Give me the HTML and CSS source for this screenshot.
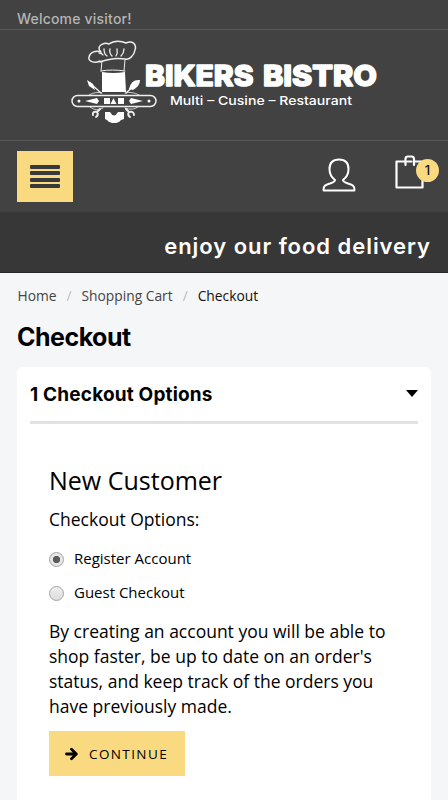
FILE: index.html
```html
<!DOCTYPE html>
<html lang="en">
<head>
<meta charset="utf-8">
<title>Checkout</title>
<link rel="stylesheet" href="styles.css">
</head>
<body>
<header>
  <div class="welcome"><span>Welcome visitor!</span></div>
  <div class="brand">
    <svg class="logo" viewBox="68 36 312 92" role="img" aria-label="Bikers Bistro">
      <g fill="none" stroke="#eee" stroke-width="1.500" stroke-linecap="round" stroke-linejoin="round">
        <path d="M100 61C94 64 88 61 89 57C90 52 96 50 101 52C95 46 104 42 109 44C114 40 122 41 126 43C132 40 137 44 135 50C134 56 129 60 125 59Q113 57 100 62"/>
        <path d="M99 53q3 0 4 2M104 49q0 5 3 7M110 49q-1 4 2 7M117 49q1 4-1 7M124 49q0 4-3 7" stroke-width="1.300"/>
        <path d="M102 61L101 71M125 60L124 71M101 71q11-2 24 0" stroke-width="1"/>
        <path d="M89 95q7-4 13-2M125 93q7-2 14 2M90 107q6 5 13 1M125 108q8 3 13-1" stroke-width="0.800"/>
        <path d="M90 83l11 10M137 83l-11 10" stroke-width="1.500"/>
        <path d="M97 112q-5-1-4 3m4-3l3-3m-3 3q2 3-1 5M129 112l-3-3m3 3q-2 3 1 5m-1-5q5-1 5 3" stroke-width="2"/>
        <rect x="72" y="95.500" width="84" height="11" rx="5.500"/>
      </g>
      <g fill="#fff">
        <path d="M102 72q11 2 23 0l1 20h-24z"/>
        <path d="M87 80l6 4 2 6-6-4zM140 80q-9-1-11 9l4 1q7-4 7-10z"/>
        <path d="M85 101l12-3 2 3-2 3zM143 101l-12-3-2 3 2 3z"/>
        <path d="M104 98h6v6h-6zM118 98h6v6h-6zM113.500 98l3 6h-6z"/>
        <circle cx="79" cy="101" r="1.500"/><circle cx="149" cy="101" r="1.500"/>
        <path d="M105 112h5q4 7 8 0h6v7l-3 1q-2 3-5 3h-4q-4-1-5-3l-2-1z"/>
      </g>
      <text class="brand-name" x="145" y="86" textLength="108.500" lengthAdjust="spacingAndGlyphs">BIKERS</text>
      <text class="brand-name" x="263" y="86" textLength="114" lengthAdjust="spacingAndGlyphs">BISTRO</text>
      <text class="brand-tag" x="170" y="104.500" textLength="182" lengthAdjust="spacingAndGlyphs">Multi – Cusine – Restaurant</text>
    </svg>
  </div>
  <div class="toolbar">
    <button class="menu" aria-label="Menu"><i></i><i></i><i></i><i></i></button>
    <div class="actions">
      <svg class="user" viewBox="0 0 34 34" fill="none" stroke="#fff" stroke-width="2" stroke-linejoin="round"><path d="M13 22C9 19 7.500 15 7.500 11C7.500 5 11 1.500 17 1.500S26.500 5 26.500 11C26.500 15 25 19 21 22C21 24 23 24.500 26 25.500C31 27 32.500 28 32.500 32Q32.500 32.500 32 32.500H2Q1.500 32.500 1.500 32C1.500 28 3 27 8 25.500C11 24.500 13 24 13 22Z"/></svg>
      <div class="cart">
        <svg viewBox="0 0 29 34" fill="none" stroke="#fff" stroke-width="2.200" stroke-linejoin="round" stroke-linecap="round"><path d="M9.500 6.500H1.500V32.500H27.500V6.500H19.500M12.500 6.500H16.500M10.500 10V4Q10.500 1.500 13 1.500H16.500Q19 1.500 19 4V10"/></svg>
        <span class="count">1</span>
      </div>
    </div>
  </div>
  <div class="slogan"><span>enjoy our food delivery</span></div>
</header>
<main>
  <nav class="crumbs"><a>Home</a><i>/</i><a>Shopping Cart</a><i>/</i><span>Checkout</span></nav>
  <h1><span>Checkout</span></h1>
  <section class="card">
    <div class="card-head"><h2>1 Checkout Options</h2><b class="caret"></b></div>
    <div class="card-body">
      <h3>New Customer</h3>
      <p class="label">Checkout Options:</p>
      <label class="option"><i class="radio on"></i><span>Register Account</span></label>
      <label class="option"><i class="radio"></i><span>Guest Checkout</span></label>
      <p class="info">By creating an account you will be able to shop faster, be up to date on an order's status, and keep track of the orders you have previously made.</p>
      <button class="continue"><svg viewBox="0 0 13 14" fill="none" stroke="#000" stroke-width="2.800" stroke-linejoin="round" stroke-linecap="round"><path d="M1.500 7H11M6.500 2.200L11.300 7L6.500 11.800"/></svg><span>CONTINUE</span></button>
    </div>
  </section>
</main>
</body>
</html>
```
FILE: styles.css
```css
* { box-sizing: border-box; }
body {
  margin: 0;
  height: 800px;
  overflow: hidden;
  background: #f5f6f8;
  color: #000;
  font-family: "Open Sans", "Noto Sans", sans-serif;
}
h1, h2, h3, p { margin: 0; }
button { border: 0; padding: 0; font: inherit; color: inherit; border-radius: 0; }
i { font-style: normal; }
header { background: #424242; color: #fff; }
.welcome {
  height: 30px;
  padding: 9px 17px 0;
  border-bottom: 1px solid #5a5a5a;
  color: #b5b5b5;
  font: 500 14px/20px Inter, sans-serif;
  letter-spacing: 0.200px;
}
.brand {
  height: 111px;
  padding: 6px 68px 0;
  border-bottom: 1px solid #565656;
}
.logo { display: block; width: 312px; height: 92px; }
.brand-name { font: 800 29px Inter, sans-serif; fill: #fff; stroke: #fff; stroke-width: 1.500; stroke-linejoin: round; }
.brand-tag { font: 500 12px Inter, sans-serif; fill: #fff; }
.toolbar {
  display: flex;
  justify-content: space-between;
  height: 71px;
  padding: 10px 24px 0 17px;
}
.menu {
  display: flex;
  flex-direction: column;
  justify-content: center;
  align-items: center;
  gap: 2.500px;
  width: 56px;
  height: 51px;
  background: #f9da80;
}
.menu i { width: 30px; height: 4px; border-radius: 1px; background: #37393b; }
.actions { display: flex; gap: 39px; }
.user { width: 34px; height: 34px; margin-top: 7px; }
.cart { position: relative; width: 29px; height: 34px; margin-top: 4px; }
.cart svg { width: 29px; height: 34px; }
.count {
  position: absolute;
  left: 21px;
  top: 4px;
  width: 23px;
  height: 23px;
  border-radius: 50%;
  background: #f9da80;
  color: #111;
  text-align: center;
  font: 500 13px/23px Inter, sans-serif;
}
.slogan {
  height: 61px;
  padding: 19px 17px 0 0;
  background: #373737;
  border-bottom: 1px solid #292929;
  text-align: right;
  font: 600 22px/30px Inter, sans-serif;
  letter-spacing: 0.960px;
  white-space: nowrap;
}
main { padding: 12px 17px 0; }
.crumbs { display: flex; height: 22px; font-size: 13.800px; line-height: 22px; color: #444; }
.crumbs a:first-child { margin-left: 0.500px; }
.crumbs i { width: 25px; text-align: center; color: #bbb; }
.crumbs span { color: #111; }
h1 { margin: 12px 0 12px; font: 700 25px/36px Inter, sans-serif; height: 36px; letter-spacing: -0.500px; }
.card { height: 440px; padding: 0 13px; background: #fff; border-radius: 6px; }
.card-head {
  display: flex;
  justify-content: space-between;
  height: 57px;
  padding-top: 14px;
  border-bottom: 3px solid #e2e2e2;
}
h2 { font: 700 19px/28px Inter, sans-serif; letter-spacing: 0.180px; white-space: nowrap; }
.caret { width: 12px; height: 7px; margin-top: 9px; background: #000; clip-path: polygon(0 0, 100% 0, 50% 100%); }
.card-body { padding: 38px 19px 0; }
h3 { font-size: 25px; font-weight: 400; line-height: 36px; }
.label { margin-top: 8px; font-size: 17.500px; line-height: 26px; }
.option { display: flex; gap: 10px; height: 34px; font-size: 15px; line-height: 26px; }
.label + .option { margin-top: 13px; }
.radio {
  width: 15px;
  height: 15px;
  margin-top: 7px;
  border: 1px solid #a4a4a4;
  border-radius: 50%;
  background: linear-gradient(#eee, #ddd);
}
.radio.on { background: radial-gradient(circle, #5b5b5b 3.300px, #e6e6e6 4px); }
.info { margin-top: 6px; font-size: 17.500px; line-height: 25px; }
.continue {
  display: flex;
  align-items: center;
  gap: 11px;
  width: 136px;
  height: 45px;
  margin-top: 12px;
  padding-left: 16px;
  background: #f9da80;
  font-size: 13.500px;
  letter-spacing: 1.400px;
}
.continue svg { width: 13px; height: 14px; }
```
